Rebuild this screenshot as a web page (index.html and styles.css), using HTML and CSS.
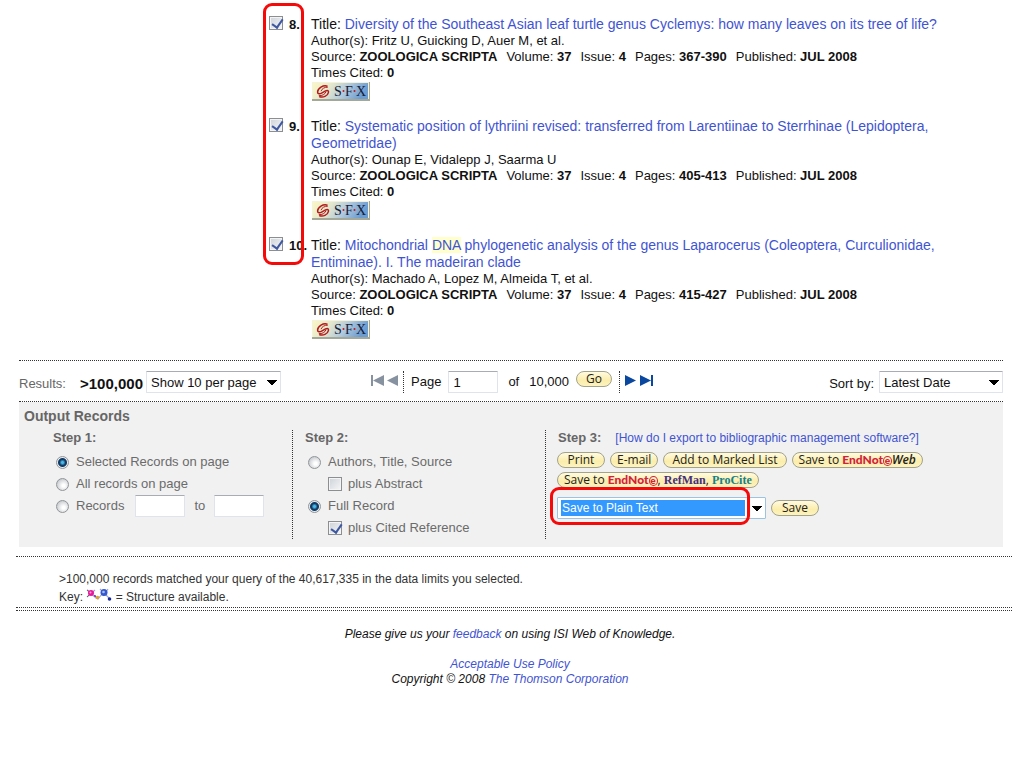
FILE: index.html
```html
<!DOCTYPE html>
<html lang="en">
<head>
<meta charset="utf-8">
<title>ISI Web of Knowledge - Results</title>
<link rel="stylesheet" href="styles.css">
</head>
<body>
<svg width="0" height="0" class="defs" aria-hidden="true">
  <defs>
    <linearGradient id="sfxbg" x1="0" x2="1" y1="0" y2="0.2">
      <stop offset="0" stop-color="#fbf6c4"/><stop offset="0.35" stop-color="#e3e8cd"/><stop offset="0.65" stop-color="#b3cadb"/><stop offset="1" stop-color="#6c9dd2"/>
    </linearGradient>
    <symbol id="sfx" viewBox="0 0 58 19">
      <rect width="58" height="19" fill="#a3a899"/>
      <rect width="57" height="17" fill="#f4f3da"/>
      <rect x="1" y="1" width="55" height="16" fill="url(#sfxbg)"/>
      <path d="M15.500 4.200C11 2.800 5.800 6.300 5.600 10c-.1 2 2.200 2.200 4 1.200l4-2.300c1.800-1 3.300-.3 2.800 1.700-.8 3.300-5.200 5.500-9.200 3.900" fill="none" stroke="#b5171c" stroke-width="1.500"/>
      <path d="M15.800 5.200c-3.200-.2-6 1.500-6.800 4M6.800 13.700c3.200.2 6.300-1.300 7.200-4" fill="none" stroke="#b5171c" stroke-width="1"/>
      <g font-family="Liberation Serif, serif" font-size="14" fill="#15203a"><text x="22" y="14">S</text><text x="33" y="14">F</text><text x="44" y="14">X</text></g>
      <circle cx="31.500" cy="9" r="1" fill="#c4161c"/><circle cx="42.500" cy="9" r="1" fill="#c4161c"/>
    </symbol>
  </defs>
</svg>
<main class="page">
  <section class="records">
    <div class="mark mark-picks"></div>
    <article class="record">
      <input type="checkbox" id="r8" class="check" checked>
      <label class="num" for="r8">8.</label>
      <div class="info">
        <h3 class="title">Title: <a href="#">Diversity of the Southeast Asian leaf turtle genus Cyclemys: how many leaves on its tree of life?</a></h3>
        <p>Author(s): Fritz U, Guicking D, Auer M, et al.</p>
        <p class="source"><span>Source: <b>ZOOLOGICA SCRIPTA</b></span><span>Volume: <b>37</b></span><span>Issue: <b>4</b></span><span>Pages: <b>367-390</b></span><span>Published: <b>JUL 2008</b></span></p>
        <p>Times Cited: <b>0</b></p>
        <a href="#" class="sfx" aria-label="SFX"><svg width="58" height="19"><use href="#sfx"/></svg></a>
      </div>
    </article>
    <article class="record">
      <input type="checkbox" id="r9" class="check" checked>
      <label class="num" for="r9">9.</label>
      <div class="info">
        <h3 class="title">Title: <a href="#">Systematic position of lythriini revised: transferred from Larentiinae to Sterrhinae (Lepidoptera, Geometridae)</a></h3>
        <p>Author(s): Ounap E, Vidalepp J, Saarma U</p>
        <p class="source"><span>Source: <b>ZOOLOGICA SCRIPTA</b></span><span>Volume: <b>37</b></span><span>Issue: <b>4</b></span><span>Pages: <b>405-413</b></span><span>Published: <b>JUL 2008</b></span></p>
        <p>Times Cited: <b>0</b></p>
        <a href="#" class="sfx" aria-label="SFX"><svg width="58" height="19"><use href="#sfx"/></svg></a>
      </div>
    </article>
    <article class="record">
      <input type="checkbox" id="r10" class="check" checked>
      <label class="num" for="r10">10.</label>
      <div class="info">
        <h3 class="title">Title: <a href="#">Mitochondrial <mark>DNA</mark> phylogenetic analysis of the genus Laparocerus (Coleoptera, Curculionidae, Entiminae). I. The madeiran clade</a></h3>
        <p>Author(s): Machado A, Lopez M, Almeida T, et al.</p>
        <p class="source"><span>Source: <b>ZOOLOGICA SCRIPTA</b></span><span>Volume: <b>37</b></span><span>Issue: <b>4</b></span><span>Pages: <b>415-427</b></span><span>Published: <b>JUL 2008</b></span></p>
        <p>Times Cited: <b>0</b></p>
        <a href="#" class="sfx" aria-label="SFX"><svg width="58" height="19"><use href="#sfx"/></svg></a>
      </div>
    </article>
  </section>

  <nav class="pager">
    <div class="count"><span class="results">Results:</span><b class="total">&gt;100,000</b>
      <select class="field per-page" aria-label="Records per page"><option>Show 10 per page</option></select></div>
    <div class="paging">
      <a href="#" aria-label="First page"><svg width="13" height="11"><path d="M0 0h2v11H0zM13 0v11L2 5.500z" fill="#8792a0"/></svg></a>
      <a href="#" class="prev" aria-label="Previous page"><svg width="11" height="11"><path d="M11 0v11L0 5.500z" fill="#8792a0"/></svg></a>
      <label class="page-label" for="pg">Page</label>
      <input type="text" id="pg" class="field page-no" value="1">
      <span class="of">of</span><span>10,000</span>
      <button class="pill go">Go</button>
      <span class="next"><a href="#" aria-label="Next page"><svg width="11" height="11"><path d="M0 0v11l11-5.500z" fill="#0a48a0"/></svg></a>
      <a href="#" aria-label="Last page"><svg width="13" height="11"><path d="M11 0h2v11h-2zM0 0v11l11-5.500z" fill="#0a48a0"/></svg></a></span>
    </div>
    <div class="sort"><label for="sort">Sort by:</label>
      <select id="sort" class="field sort-by"><option>Latest Date</option></select></div>
  </nav>

  <section class="output">
    <h2>Output Records</h2>
    <div class="steps">
      <div class="step step1">
        <h3>Step 1:</h3>
        <div class="row"><input type="radio" name="which" id="w1" class="radio" checked><label for="w1">Selected Records on page</label></div>
        <div class="row"><input type="radio" name="which" id="w2" class="radio"><label for="w2">All records on page</label></div>
        <div class="row"><input type="radio" name="which" id="w3" class="radio"><label for="w3">Records</label><input type="text" class="field from" aria-label="From record"><span>to</span><input type="text" class="field upto" aria-label="To record"></div>
      </div>
      <div class="step step2">
        <h3>Step 2:</h3>
        <div class="row"><input type="radio" name="fmt" id="f1" class="radio"><label for="f1">Authors, Title, Source</label></div>
        <div class="row sub"><input type="checkbox" id="f2" class="check"><label for="f2">plus Abstract</label></div>
        <div class="row"><input type="radio" name="fmt" id="f3" class="radio" checked><label for="f3">Full Record</label></div>
        <div class="row sub"><input type="checkbox" id="f4" class="check" checked><label for="f4">plus Cited Reference</label></div>
      </div>
      <div class="step step3">
        <div class="head"><h3>Step 3:</h3><a href="#">[How do I export to bibliographic management software?]</a></div>
        <div class="buttons">
          <button class="pill print">Print</button>
          <button class="pill brand">E-mail</button>
          <button class="pill">Add to Marked List</button>
          <button class="pill brand">Save to <b class="endnote">EndNot<span class="e">e</span></b><em class="web">Web</em></button>
          <button class="pill brand">Save to <b class="endnote">EndNot<span class="e">e</span></b>, <b class="refman">RefMan</b>, <b class="procite">ProCite</b></button>
        </div>
        <div class="save">
          <select class="field format" aria-label="Save format"><option>Save to Plain Text</option></select>
          <button class="pill print">Save</button>
          <div class="mark mark-format"></div>
        </div>
      </div>
    </div>
  </section>

  <section class="summary">
    <p>&gt;100,000 records matched your query of the 40,617,335 in the data limits you selected.</p>
    <p>Key: <svg width="26" height="14" viewBox="0 0 26 14">
      <path d="M1 2l9 8M1 9l8-7M10 10l2 1 4-5M14 1l10 10M22 1l-5 7" stroke="#9aa6d8" stroke-width="1.200" fill="none"/>
      <path d="M1 2l3 2M1 9l2-2M8 7l3 3" stroke="#666" fill="none"/>
      <circle cx="5" cy="5" r="3" fill="#e8189a"/><circle cx="4.500" cy="4.500" r="1" fill="#ffa5d8"/>
      <circle cx="11.500" cy="9.500" r="1.800" fill="#e0a52a"/><circle cx="9" cy="8" r="1" fill="#8a36c8"/>
      <circle cx="18" cy="4.500" r="3.500" fill="#3558cf"/><circle cx="17.500" cy="4" r="1.300" fill="#a9bff5"/>
      <circle cx="23.500" cy="11" r="1.800" fill="#1a2a9c"/></svg> = Structure available.</p>
  </section>
  <footer class="footer">
    <p>Please give us your <a href="#">feedback</a> on using ISI Web of Knowledge.</p>
    <p class="legal"><a href="#">Acceptable Use Policy</a></p>
    <p>Copyright © 2008 <a href="#">The Thomson Corporation</a></p>
  </footer>
</main>
</body>
</html>
```
FILE: styles.css
```css
* { box-sizing: border-box; }
body { margin: 0; background: #fff; color: #111; font: 13px/16px "Liberation Sans", Arial, sans-serif; }
.defs { position: absolute; }
p, h2, h3 { margin: 0; }
a { color: #3f54d2; text-decoration: none; }
svg { display: block; }
.page { padding: 16px 12px 0 16px; }

.records { position: relative; display: flex; flex-direction: column; gap: 17px; padding: 0 24px 21px 253px; }
.record { display: grid; grid-template-columns: 20px 22px 1fr; }
.num { font-weight: bold; line-height: 17px; white-space: nowrap; }
.title { font-weight: normal; font-size: 14px; line-height: 17px; }
mark { background: #ffffcc; color: inherit; }
.source { display: flex; flex-wrap: wrap; column-gap: 9px; }
.sfx { display: block; margin: 1px 0 0 1px; width: 58px; }

.mark { position: absolute; border: 3px solid #f50a0a; border-radius: 9px; pointer-events: none; }
.mark-picks { left: 247px; top: -13px; width: 41px; height: 262px; }
.mark-format { left: -7px; top: -10px; width: 200px; height: 38px; }

.check { appearance: none; width: 14px; height: 14px; margin: 0; border: 1px solid #8b8f92; background: linear-gradient(135deg, #cdd3da, #f6f6f6); box-shadow: inset 0 0 0 1px #f4f4f4; position: relative; }
.check:checked::after { content: ""; position: absolute; left: 4px; top: 0; width: 5px; height: 9px; border: solid #3d57a0; border-width: 0 2px 2px 0; transform: rotate(35deg); }
.radio { appearance: none; width: 13px; height: 13px; margin: 0; border: 1px solid #919599; border-radius: 50%; background: radial-gradient(circle at 60% 60%, #fff 15%, #c9ccd0 75%); }
.radio:checked { background: radial-gradient(circle at 50% 50%, #48b8e8 0 1px, #123c66 3px 4px, #e9ebed 5px); }

.field { appearance: none; height: 22px; border: 1px solid #dfe3ed; border-top-color: #a9acb3; border-radius: 1px; background-color: #fff; color: #111; font: 13px "Liberation Sans", Arial, sans-serif; padding: 0 4px; margin: 0; }
select.field { background-image: linear-gradient(to bottom left, #000 50%, transparent 51%), linear-gradient(to bottom right, #000 50%, transparent 51%); background-repeat: no-repeat; background-size: 5px 5px; background-position: right 8px center, right 3px center; }

.pager { margin: 0 9px 0 3px; border-top: 1px dotted #333; border-bottom: 1px dotted #333; height: 42px; display: grid; grid-template-columns: 352px auto 1fr; align-items: start; padding-top: 10px; line-height: 22px; }
.count, .paging, .sort { display: flex; }
.results { color: #666; width: 61px; line-height: 26px; }
.total { font-size: 15px; line-height: 26px; width: 66px; }
.per-page { width: 135px; }
.paging a { display: block; padding-top: 4px; }
.prev { margin-left: 3px; padding-right: 5px; border-right: 1px dotted #333; }
.page-label { margin: 0 7px; }
.page-no { width: 50px; }
.of { margin: 0 10px; }
.next { display: flex; gap: 4px; margin-left: 7px; padding-left: 5px; border-left: 1px dotted #333; }
.sort { justify-content: flex-end; gap: 5px; line-height: 26px; }
.sort-by { width: 124px; }

.pill { border: 1px solid #a3a28a; border-radius: 8px; height: 16px; padding: 0 8px; background: linear-gradient(#fffbe0, #fbedaa 60%, #fdf3c0); color: #222; font: 12px/14px "Open Sans", sans-serif; white-space: nowrap; }
.print { width: 48px; }
.go { width: 36px; margin-left: 7px; }

.output { margin: 0 9px 0 3px; background: #f1f1f1; color: #6b6b6b; padding: 6px 5px 8px; }
.output h2 { font-size: 14px; line-height: 16px; color: #666; margin-bottom: 6px; }
.output h3 { font-size: 13px; line-height: 16px; color: #666; }
.steps { display: grid; grid-template-columns: 268px 253px 1fr; min-height: 106px; }
.step1 { padding-left: 29px; }
.step2, .step3 { border-left: 1px dotted #333; padding-left: 12px; }
.step h3 { margin-bottom: 5px; }
.row { display: flex; align-items: center; gap: 7px; height: 22px; padding-left: 3px; }
.row.sub { padding-left: 23px; gap: 6px; }
.from { width: 50px; margin: 0 2px 0 4px; }
.upto { width: 50px; margin-left: 2px; }
.head { display: flex; gap: 14px; }
.head a { font-size: 12px; }
.buttons { display: flex; flex-wrap: wrap; gap: 4px 5px; margin-left: -1px; padding: 1px 60px 0 0; }
.brand { padding: 0 6px; }
.endnote { font-family: Lato, sans-serif; font-weight: 900; color: #d2213c; }
.e { display: inline-block; width: 9px; height: 10px; line-height: 7px; border: 1px solid #d2213c; border-radius: 50%; font-size: 10px; }
.web { font-weight: 600; }
.refman, .procite { font-family: "Liberation Serif", serif; }
.refman { color: #43307f; }
.procite { color: #15808a; }
.save { position: relative; display: flex; align-items: center; gap: 5px; margin: 9px 0 0 -1px; }
select.format { width: 209px; border-color: #9cc4e0; font-size: 12px; color: #fff; background-image: linear-gradient(to bottom left, #000 50%, transparent 51%), linear-gradient(to bottom right, #000 50%, transparent 51%), linear-gradient(#3399ff, #3399ff); background-size: 5px 5px, 5px 5px, 184px 16px; background-position: right 8px center, right 3px center, 3px center; }

.summary { border-top: 1px dotted #333; border-bottom: 1px dotted #333; margin-top: 9px; padding: 14px 43px 1px; font-size: 12px; line-height: 17px; color: #333; }
.summary svg { display: inline-block; vertical-align: -1px; }
.footer { text-align: center; font-style: italic; margin-top: 2px; border-top: 1px dotted #333; padding: 16px 8px 0 0; line-height: 15px; font-size: 12px; }
.legal { margin-top: 15px; }
```
